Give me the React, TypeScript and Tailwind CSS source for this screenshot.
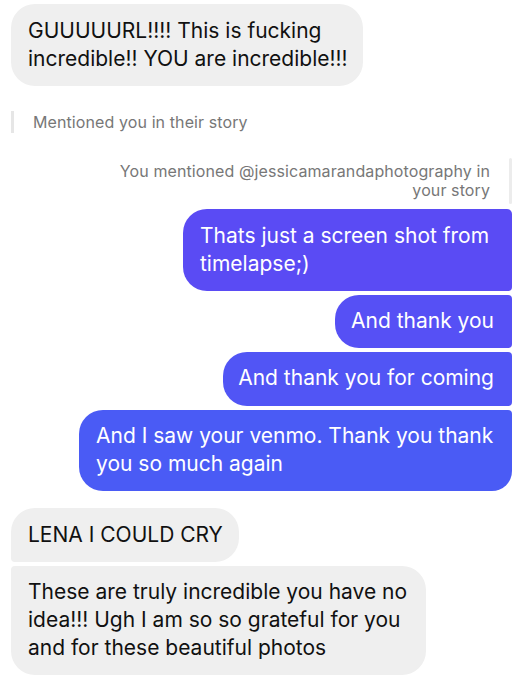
import React from "react";

const font = { fontFamily: "Inter, 'Noto Sans', sans-serif" };

export default function App() {
  return (
    <div
      className="w-[524px] h-[694px] bg-white overflow-hidden flex flex-col"
      style={font}
    >
      {/* incoming bubble */}
      <div className="mt-[4px] ml-[11px] w-[352px] h-[82px] rounded-[24px] bg-[#efefef] pl-[17px] pt-[13px] text-[21px] leading-[28px] text-[#111] whitespace-nowrap">
        GUUUUURL!!!! This is fucking
        <br />
        incredible!! YOU are incredible!!!
      </div>

      {/* mention note */}
      <div className="mt-[25px] ml-[11px] flex items-center h-[22px]">
        <div className="w-[3px] h-[22px] bg-[#e6e6e6]" />
        <div className="ml-[19px] text-[16px] tracking-[0.1px] text-[#777] leading-[20px]">
          Mentioned you in their story
        </div>
      </div>

      {/* your mention */}
      <div className="mt-[25px] mr-[12px] self-end flex items-stretch">
        <div className="text-right text-[16px] tracking-[0.1px] leading-[19px] text-[#777] pt-[4px] pb-[4px] whitespace-nowrap">
          You mentioned @jessicamarandaphotography in
          <br />
          your story
        </div>
        <div className="ml-[19px] w-[3px] bg-[#ececec] rounded-sm" />
      </div>

      {/* outgoing group */}
      <div className="mt-[5px] mr-[12px] flex flex-col items-end gap-[4px] text-white text-[21px] leading-[28px] whitespace-nowrap">
        <div className="w-[329px] h-[82px] bg-[#5a4bf4] rounded-tl-[24px] rounded-bl-[24px] rounded-tr-[5px] rounded-br-[4px] pl-[17px] pt-[13px]">
          Thats just a screen shot from
          <br />
          timelapse;)
        </div>
        <div className="w-[177px] h-[53px] bg-[#5650f5] rounded-l-[24px] rounded-r-[4px] pr-[18px] pt-[12px] text-right">
          And thank you
        </div>
        <div className="w-[289px] h-[54px] bg-[#5155f5] rounded-l-[24px] rounded-r-[4px] pr-[18px] pt-[12px] text-right">
          And thank you for coming
        </div>
        <div className="w-[433px] h-[81px] bg-[#4a5bf5] rounded-tl-[24px] rounded-bl-[24px] rounded-tr-[4px] rounded-br-[20px] pl-[17px] pt-[12px]">
          And I saw your venmo. Thank you thank
          <br />
          you so much again
        </div>
      </div>

      {/* incoming group */}
      <div className="mt-[17px] ml-[11px] flex flex-col items-start gap-[4px] text-[#111] text-[21px] leading-[28px] whitespace-nowrap">
        <div className="w-[228px] h-[54px] bg-[#efefef] rounded-tl-[24px] rounded-r-[24px] rounded-bl-[4px] pl-[17px] pt-[13px]">
          LENA I COULD CRY
        </div>
        <div className="w-[415px] h-[109px] bg-[#efefef] rounded-tl-[4px] rounded-bl-[24px] rounded-r-[24px] pl-[17px] pt-[12px]">
          These are truly incredible you have no
          <br />
          idea!!! Ugh I am so so grateful for you
          <br />
          and for these beautiful photos
        </div>
      </div>
    </div>
  );
}
